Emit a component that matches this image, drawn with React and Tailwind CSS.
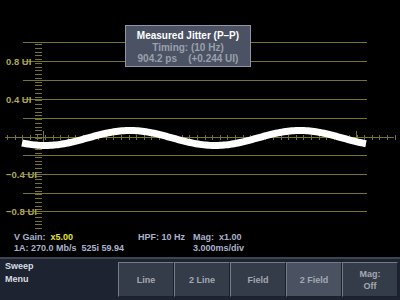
const GRID = "#77742f";
const LABEL = "#aca758";

const rows = [42, 61, 80, 99, 118, 155, 174, 193, 211];
const labels = [
  { y: 61, t: "0.8 UI", x: 6 },
  { y: 99, t: "0.4 UI", x: 6 },
  { y: 174, t: "\u22120.4 UI", x: 6 },
  { y: 211, t: "\u22120.8 UI", x: 6 },
];

const wave = () => {
  const pts = [];
  for (let x = 22; x <= 367; x += 2) {
    const y = 138 + 7.5 * Math.cos((2 * Math.PI * (x - 45)) / 170);
    pts.push(`${x},${y.toFixed(2)}`);
  }
  return "M" + pts.join(" L");
};

const Scope = () => (
  <svg width="400" height="230" viewBox="0 0 400 230" className="block">
    {rows.map((y) => (
      <line key={y} x1="23" x2="367" y1={y + 0.5} y2={y + 0.5} stroke={GRID} strokeWidth="1" />
    ))}
    {/* vertical tick column */}
    {[...Array(50)].map((_, i) => {
      const y = Math.round(44 + i * 3.76) + 0.5;
      return <line key={i} x1="35" x2="42" y1={y} y2={y} stroke={GRID} strokeWidth="1" />;
    })}
    {/* center axis */}
    <line x1="5" x2="394" y1="137.5" y2="137.5" stroke={GRID} strokeWidth="1" />
    {[...Array(52)].map((_, i) => {
      const x = Math.round(7 + i * 7.6) + 0.5;
      return <line key={i} x1={x} x2={x} y1="135" y2="140" stroke={GRID} strokeWidth="1" />;
    })}
    <line x1="43.5" x2="43.5" y1="131" y2="142" stroke={GRID} strokeWidth="1" />
    <line x1="356.5" x2="356.5" y1="131" y2="142" stroke={GRID} strokeWidth="1" />
    {labels.map((l) => (
      <g key={l.t}>
        <text
          x={l.x}
          y={l.y + 3.5}
          fill={LABEL}
          fontSize="9.5"
          fontWeight="700"
          fontFamily="'Liberation Sans', Arial, sans-serif"
        >
          {l.t}
        </text>
        <line x1="31" x2="35" y1={l.y + 0.5} y2={l.y + 0.5} stroke={GRID} />
      </g>
    ))}
    <path d={wave()} fill="none" stroke="#ffffff" strokeWidth="7" strokeLinejoin="round" />
  </svg>
);

const Btn = ({ children, active }) => (
  <div
    className={`flex-1 flex flex-col items-center justify-center border border-t-[#747c8c] border-l-[#747c8c] border-r-[#1a1f28] border-b-[#1a1f28] text-[9px] font-bold leading-[12px] text-[#a3a8b3] ${
      active ? "bg-[#4a5262]" : "bg-[#353c49]"
    }`}
  >
    {children}
  </div>
);

export default function App() {
  return (
    <div
      className="w-[400px] h-[300px] bg-black flex flex-col overflow-hidden"
      style={{ fontFamily: "'Liberation Sans', Arial, sans-serif" }}
    >
      <div className="relative h-[230px]">
        <Scope />
        <div className="absolute left-[125px] top-[25px] w-[126px] h-[42px] bg-[#4b5263] border border-[#8e95a5] flex flex-col items-center pt-[4px] text-[10px] font-bold leading-[11.5px]">
          <div className="text-white">Measured Jitter (P–P)</div>
          <div className="text-[#9aa0ad]">Timing: (10 Hz)</div>
          <div className="text-[#9aa0ad] whitespace-pre">904.2 ps    (+0.244 UI)</div>
        </div>
      </div>
      <div className="h-[27px] flex text-[9px] font-bold leading-[10px] text-[#aab3cc] pt-[2px]">
        <div className="w-[124px] pl-[14px] flex flex-col gap-[1px]">
          <div className="whitespace-pre">
            V Gain:  <span className="text-[#e4e03a]">x5.00</span>
          </div>
          <div className="whitespace-pre">1A: 270.0 Mb/s  525i 59.94</div>
        </div>
        <div className="w-[69px] pl-[14px]">HPF: 10 Hz</div>
        <div className="flex flex-col gap-[1px]">
          <div className="whitespace-pre">Mag:  x1.00</div>
          <div>3.000ms/div</div>
        </div>
      </div>
      <div className="flex-1 bg-[#1d2330] border-t-2 border-[#3d4553] flex pl-[5px] pr-[2px] pt-[3px] pb-[3px]">
        <div className="w-[113px] text-[9px] font-bold leading-[13px] text-[#d8dbe2] -mt-[2px]">
          <div>Sweep</div>
          <div>Menu</div>
        </div>
        <div className="flex-1 flex">
          <Btn>Line</Btn>
          <Btn>2 Line</Btn>
          <Btn>Field</Btn>
          <Btn active>2 Field</Btn>
          <Btn>
            <span>Mag:</span>
            <span>Off</span>
          </Btn>
        </div>
      </div>
    </div>
  );
}
